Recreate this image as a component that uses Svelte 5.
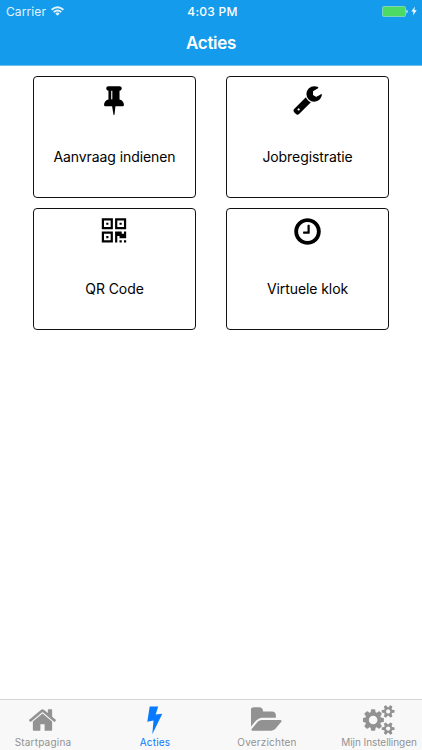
<script lang="ts">
  type Action = { label: string; icon: string; viewBox: string };
  type Tab = Action & { width: number };

  const actions: Action[] = [
    {
      label: 'Aanvraag indienen',
      viewBox: '30 0 1792 1792',
      icon: 'M800 864v-448q0-14-9-23t-23-9-23 9-9 23v448q0 14 9 23t23 9 23-9 9-23zm672 352q0 26-19 45t-45 19h-429l-51 483q-2 12-10.500 20.500t-20.500 8.500h-1q-27 0-32-27l-76-485h-404q-26 0-45-19t-19-45q0-123 78.500-221.500t177.500-98.500v-512q-52 0-90-38t-38-90 38-90 90-38h640q52 0 90 38t38 90-38 90-90 38v512q99 0 177.500 98.500t78.500 221.500z',
    },
    {
      label: 'Jobregistratie',
      viewBox: '0 0 1792 1792',
      icon: 'M448 1472q0-26-19-45t-45-19-45 19-19 45 19 45 45 19 45-19 19-45zm644-420l-682 682q-37 37-90 37-52 0-91-37l-106-108q-38-36-38-90 0-53 38-91l681-681q39 98 114.500 173.500t173.500 114.500zm634-435q0 39-23 106-47 134-164.500 217.500t-258.500 83.500q-185 0-316.500-131.500t-131.500-316.500 131.500-316.500 316.500-131.500q58 0 121.500 16.500t107.500 46.500q16 11 16 28t-16 28l-293 169v224l193 107q5-3 79-48.500t135.500-81 70.500-35.500q15 0 23.500 10t8.500 25z',
    },
    {
      label: 'QR Code',
      viewBox: '-34 0 1792 1792',
      icon: 'M512 1152v128h-128v-128h128zm0-768v128H384V384h128zm768 0v128h-128V384h128zM256 1407h384v-383H256v383zm0-767h384V256H256v384zm768 0h384V256h-384v384zM768 896v640H128V896h640zm512 512v128h-128v-128h128zm256 0v128h-128v-128h128zm0-512v384h-384v-128h-128v384H896V896h384v128h128V896h128zM768 128v640H128V128h640zm768 0v640H896V128h640z',
    },
    {
      label: 'Virtuele klok',
      viewBox: '0 0 1792 1792',
      icon: 'M1024 544v448q0 14-9 23t-23 9h-320q-14 0-23-9t-9-23v-64q0-14 9-23t23-9h224v-352q0-14 9-23t23-9h64q14 0 23 9t9 23zm416 352q0-148-73-273t-198-198-273-73-273 73-198 198-73 273 73 273 198 198 273 73 273-73 198-198 73-273zm224 0q0 209-103 385.500t-279.500 279.500-385.500 103-385.500-103-279.500-279.500-103-385.500 103-385.500 279.500-279.500 385.500-103 385.500 103 279.500 279.500 103 385.500z',
    },
  ];

  const tabs: Tab[] = [
    {
      label: 'Startpagina',
      width: 30,
      viewBox: '30 0 1792 1792',
      icon: 'M1472 992v480q0 26-19 45t-45 19h-384v-384h-256v384h-384q-26 0-45-19t-19-45v-480q0-1 .5-3t.5-3l575-474 575 474q1 2 1 6zm223-69l-62 74q-8 9-21 11h-3q-13 0-21-7l-692-577-692 577q-12 8-24 7-13-2-21-11l-62-74q-8-10-7-23.500t11-21.500l719-599q32-26 76-26t76 26l244 204v-195q0-14 9-23t23-9h192q14 0 23 9t9 23v408l219 182q10 8 11 21.500t-7 23.500z',
    },
    {
      label: 'Acties',
      width: 30,
      viewBox: '0 0 30 30',
      icon: 'M9.700 1.400H18.200L15.700 9.500L22.300 8.700L12.300 29.200L13.500 15.400L7.300 16.700Z',
    },
    {
      label: 'Overzichten',
      width: 32,
      viewBox: '50 0 1912 1792',
      icon: 'M1879 952q0 31-31 66l-336 396q-43 51-120.500 86.500t-143.500 35.500h-1088q-34 0-60.500-13t-26.500-43q0-31 31-66l336-396q43-51 120.500-86.500t143.500-35.500h1088q34 0 60.500 13t26.500 43zm-343-344v160h-832q-94 0-197 47.500t-164 119.500l-337 396-5 6q0-4-.5-12.500t-.5-12.500v-960q0-92 66-158t158-66h320q92 0 158 66t66 158v32h544q92 0 158 66t66 158z',
    },
    {
      label: 'Mijn Instellingen',
      width: 33,
      viewBox: '60 0 1920 1792',
      icon: 'M896 896q0-106-75-181t-181-75-181 75-75 181 75 181 181 75 181-75 75-181zm768 512q0-52-38-90t-90-38-90 38-38 90q0 53 37.500 90.500t90.500 37.500 90.500-37.500 37.500-90.500zm0-1024q0-52-38-90t-90-38-90 38-38 90q0 53 37.500 90.500t90.500 37.500 90.500-37.500 37.500-90.500zm-384 421v185q0 10-7 19.500t-16 10.500l-155 24q-11 35-32 76 34 48 90 115 7 11 7 20 0 12-7 19-23 30-82.500 89.500t-78.500 59.500q-11 0-21-7l-115-90q-37 19-77 31-11 108-23 155-7 24-30 24h-186q-11 0-20-7.500t-10-17.500l-23-153q-34-10-75-31l-118 89q-7 7-20 7-11 0-21-8-144-133-144-160 0-9 7-19 10-14 41-53t47-61q-23-44-35-82l-152-24q-10-1-17-9.500t-7-19.500v-185q0-10 7-19.500t16-10.500l155-24q11-35 32-76-34-48-90-115-7-11-7-20 0-12 7-20 22-30 82-89t79-59q11 0 21 7l115 90q34-18 77-32 11-108 23-154 7-24 30-24h186q11 0 20 7.500t10 17.500l23 153q34 10 75 31l118-89q8-7 20-7 11 0 21 8 144 133 144 160 0 8-7 19-12 16-42 54t-45 60q23 48 34 82l152 23q10 2 17 10.500t7 19.500zm640 533v140q0 16-149 31-12 27-30 52 51 113 51 138 0 4-4 7-122 71-124 71-8 0-46-47t-52-68q-20 2-30 2t-30-2q-14 21-52 68t-46 47q-2 0-124-71-4-3-4-7 0-25 51-138-18-25-30-52-149-15-149-31v-140q0-16 149-31 13-29 30-52-51-113-51-138 0-4 4-7 4-2 35-20t59-34 30-16q8 0 46 46.500t52 67.500q20-2 30-2t30 2q51-71 92-112l6-2q4 0 124 70 4 3 4 7 0 25-51 138 17 23 30 52 149 15 149 31zm0-1024v140q0 16-149 31-12 27-30 52 51 113 51 138 0 4-4 7-122 71-124 71-8 0-46-47t-52-68q-20 2-30 2t-30-2q-14 21-52 68t-46 47q-2 0-124-71-4-3-4-7 0-25 51-138-18-25-30-52-149-15-149-31v-140q0-16 149-31 13-29 30-52-51-113-51-138 0-4 4-7 4-2 35-20t59-34 30-16q8 0 46 46.500t52 67.500q20-2 30-2t30 2q51-71 92-112l6-2q4 0 124 70 4 3 4 7 0 25-51 138 17 23 30 52 149 15 149 31z',
    },
  ];

  let activeTab = $state('Acties');
</script>

<div class="screen">
  <header>
    <div class="status-bar">
      <div class="carrier">
        <span>Carrier</span>
        <svg class="wifi" viewBox="0 0 13 10" fill="none" stroke="currentColor" stroke-width="1.800">
          <path d="M.6 3.700Q6.500-1.300 12.400 3.700" />
          <path d="M2.700 6.100Q6.500 2.900 10.300 6.100" />
          <path d="M6.500 9.700L4.300 7.500Q6.500 5.700 8.700 7.500Z" fill="currentColor" stroke="none" />
        </svg>
      </div>
      <span class="time">4:03 PM</span>
      <div class="power">
        <svg class="battery" viewBox="0 0 26 11">
          <rect x=".5" y=".5" width="23" height="10" rx="1.200" fill="#4cd964" stroke="#8edcc0" stroke-width=".8" />
          <path d="M24.300 3.600Q25.800 4 25.800 5.500T24.300 7.400Z" fill="#bfe6fb" />
        </svg>
        <svg class="charging" viewBox="0 0 6 10" fill="currentColor">
          <path d="M4 .5L.3 5.600H2.600L1.800 9.500L5.700 4.200H3.300Z" />
        </svg>
      </div>
    </div>
    <h1>Acties</h1>
  </header>

  <main>
    {#each actions as action}
      <button class="card">
        <svg viewBox={action.viewBox} fill="currentColor"><path d={action.icon} /></svg>
        <span>{action.label}</span>
      </button>
    {/each}
  </main>

  <nav>
    {#each tabs as tab}
      <button class="tab" class:active={activeTab === tab.label} onclick={() => (activeTab = tab.label)}>
        <svg viewBox={tab.viewBox} width={tab.width} height="30" fill="currentColor"><path d={tab.icon} /></svg>
        <span>{tab.label}</span>
      </button>
    {/each}
  </nav>
</div>

<style>
  :global(body) {
    margin: 0;
  }

  .screen {
    display: flex;
    flex-direction: column;
    width: 422px;
    height: 750px;
    background: #fff;
    font-family: Inter, Roboto, sans-serif;
    overflow: hidden;
  }

  button {
    margin: 0;
    padding: 0;
    border: 0;
    background: none;
    color: inherit;
    font: inherit;
    cursor: pointer;
  }

  svg {
    display: block;
    flex: none;
  }

  header {
    box-sizing: border-box;
    height: 66px;
    background: #159beb;
    border-bottom: 1px solid #6fbdf0;
    color: #fff;
  }

  .status-bar {
    display: grid;
    grid-template-columns: 1fr auto 1fr;
    align-items: center;
    height: 22px;
    padding: 0 5px 0 6px;
    font-size: 12px;
  }

  .carrier {
    display: flex;
    align-items: center;
    gap: 5px;
    color: #e3f3fd;
    letter-spacing: 0.1px;
  }

  .wifi {
    width: 13px;
    height: 10px;
  }

  .time {
    padding-left: 2px;
    font-weight: 500;
    letter-spacing: 0.25px;
  }

  .power {
    display: flex;
    align-items: center;
    justify-content: flex-end;
    gap: 3px;
  }

  .battery {
    width: 26px;
    height: 11px;
  }

  .charging {
    width: 6px;
    height: 10px;
  }

  h1 {
    margin: 0;
    font-size: 17px;
    font-weight: 600;
    letter-spacing: -0.3px;
    line-height: 43px;
    text-align: center;
  }

  main {
    display: grid;
    grid-template-columns: 163px 163px;
    grid-auto-rows: 122px;
    gap: 10px 30px;
    flex: 1;
    padding: 10px 33px;
  }

  .card {
    display: flex;
    flex-direction: column;
    align-items: center;
    box-sizing: border-box;
    padding-top: 7px;
    border: 1px solid #111;
    border-radius: 4px;
    color: #000;
    font-size: 14px;
    letter-spacing: -0.08px;
  }

  .card svg {
    width: 31px;
    height: 31px;
  }

  .card span {
    margin-top: 33px;
    line-height: 18px;
  }

  nav {
    display: grid;
    grid-template-columns: repeat(4, 112px);
    justify-content: center;
    box-sizing: border-box;
    height: 51px;
    background: #f8f8f8;
    border-top: 1px solid #d5d5d5;
  }

  .tab {
    display: flex;
    flex-direction: column;
    align-items: center;
    padding-top: 5px;
    color: #929292;
    font-size: 10px;
    letter-spacing: 0.2px;
    white-space: nowrap;
  }

  .tab:last-child {
    letter-spacing: -0.05px;
  }

  .tab span {
    line-height: 14px;
  }

  .tab.active {
    color: #077aff;
  }
</style>
